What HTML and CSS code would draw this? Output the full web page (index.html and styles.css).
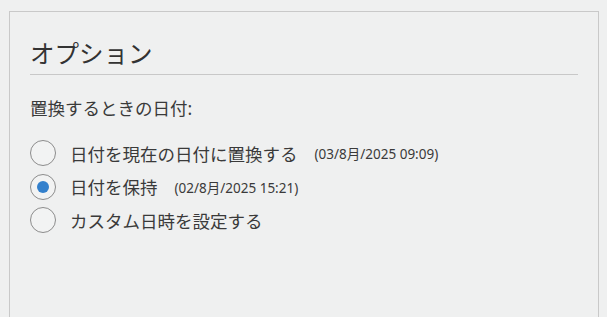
FILE: index.html
```html
<!DOCTYPE html>
<html lang="ja">
<head>
<meta charset="utf-8">
<link rel="stylesheet" href="styles.css">
</head>
<body>
<div class="panel">
  <h1 class="title">オプション</h1>
  <div class="label">置換するときの日付:</div>
  <div class="options">
    <div class="option">
      <span class="radio"></span>
      <span class="text">日付を現在の日付に置換する</span>
      <span class="date">(03/8月/2025 09:09)</span>
    </div>
    <div class="option">
      <span class="radio checked"></span>
      <span class="text">日付を保持</span>
      <span class="date">(02/8月/2025 15:21)</span>
    </div>
    <div class="option">
      <span class="radio"></span>
      <span class="text">カスタム日時を設定する</span>
    </div>
  </div>
</div>
</body>
</html>
```
FILE: styles.css
```css
html, body {
  margin: 0;
  padding: 0;
  background: #eff0f0;
  height: 100%;
  overflow: hidden;
}
body {
  font-family: "Noto Sans", "Noto Sans CJK JP", sans-serif;
  color: #3a3a3a;
}
.panel {
  box-sizing: border-box;
  margin: 11px 0 0 9px;
  width: 590px;
  height: calc(100% - 11px);
  border: 1px solid #c9c9c9;
  border-bottom: none;
  padding: 26px 20px 0 20px;
}
.title {
  margin: 0;
  font-weight: normal;
  font-size: 24.5px;
  line-height: 32px;
  padding: 0 0 4px 0;
  border-bottom: 1px solid #c8c8c8;
  color: #333;
}
.label {
  margin-top: 21px;
  font-size: 17.5px;
  line-height: 24px;
}
.options {
  margin-top: 20px;
  display: flex;
  flex-direction: column;
  gap: 7.5px;
}
.option {
  display: flex;
  align-items: center;
  height: 26px;
}
.radio {
  box-sizing: border-box;
  width: 26px;
  height: 26px;
  border: 1px solid #8c8c8c;
  border-radius: 50%;
  background: #f2f3f3;
  display: flex;
  align-items: center;
  justify-content: center;
  flex: none;
}
.radio.checked::after {
  content: "";
  width: 12px;
  height: 12px;
  border-radius: 50%;
  background: #3380cc;
}
.text {
  margin-left: 14px;
  font-size: 17.5px;
}
.date {
  margin-left: 17px;
  font-size: 13.5px;
}
```
